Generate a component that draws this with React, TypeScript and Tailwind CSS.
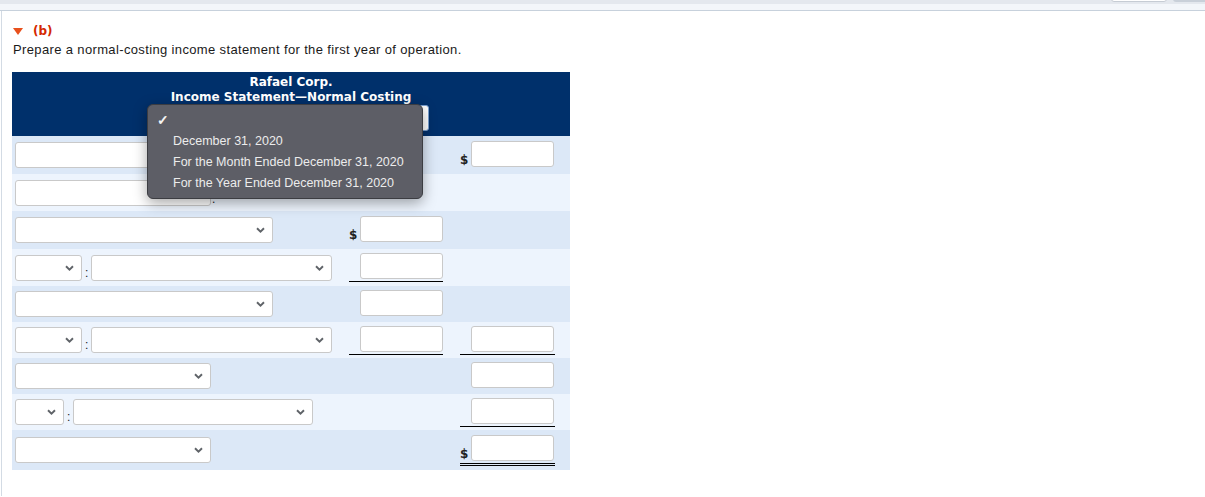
import React from "react";

function Chevron() {
  return (
    <svg width="9" height="6" viewBox="0 0 9 6" className="absolute right-[7px] top-1/2 -translate-y-1/2">
      <path d="M1 1.2 L4.5 4.6 L8 1.2" fill="none" stroke="#5f6368" strokeWidth="1.9" />
    </svg>
  );
}

function Select({ w }: { w: string }) {
  return (
    <div className={`relative h-[26px] ${w} shrink-0 rounded-[3px] border border-[#c9c9c9] bg-white`}>
      <Chevron />
    </div>
  );
}

function Box() {
  return <div className="h-[26px] w-[83px] rounded-[3px] border border-[#c9c9c9] bg-white" />;
}

type Line = "none" | "single" | "double";

function Amount({ dollar, line, col }: { dollar?: boolean; line?: Line; col: 2 | 3 }) {
  const lineCls =
    line === "single"
      ? "border-b border-black"
      : line === "double"
        ? "border-b-[3px] border-double border-black"
        : "border-b border-transparent";
  return (
    <div className={`flex items-end ${col === 2 ? "w-[94px]" : "w-[95px]"} ${lineCls} pb-[2px]`}>
      <span className="w-[11px] text-[12px] font-bold leading-[14px] text-[#222] font-['DejaVu_Sans',Verdana,sans-serif]">
        {dollar ? "$" : ""}
      </span>
      <Box />
    </div>
  );
}

function Row({
  h,
  dark,
  left,
  c2,
  c3,
}: {
  h: string;
  dark: boolean;
  left: React.ReactNode;
  c2?: React.ReactNode;
  c3?: React.ReactNode;
}) {
  return (
    <div className={`flex items-center ${h} ${dark ? "bg-[#dce8f7]" : "bg-[#edf4fd]"}`}>
      <div className="flex w-[337px] items-center pl-[3px]">{left}</div>
      <div className="w-[111px]">{c2}</div>
      <div className="w-[110px]">{c3}</div>
    </div>
  );
}

function Colon() {
  return <span className="mx-[3px] self-end pb-[2px] text-[12px] leading-[12px] text-[#222]">:</span>;
}

export default function App() {
  return (
    <div className="min-h-[497px] bg-white font-['Liberation_Sans',Arial,sans-serif] text-[#222]">
      <div className="relative h-[4px] bg-[#e4e8ee]">
        <div className="absolute left-[1111px] top-[-4px] h-[6px] w-[56px] rounded-b-[3px] border border-[#c6ccd4] bg-white" />
        <div className="absolute left-[1173px] top-[-4px] h-[6px] w-[40px] rounded-b-[3px] bg-[#c9d0d9]" />
      </div>
      <div className="h-[7px] border-b border-[#c7d1dc] bg-[#f3f6fa]" />
      <div className="ml-[1px] min-h-[485px] border-l border-[#d3dbe4] pl-[10px] pt-[12px]">
        <div className="flex items-center gap-[10px] pl-[1px]">
          <svg width="10" height="7" viewBox="0 0 10 7">
            <path d="M0 0 L10 0 L5 7 Z" fill="#e8501c" />
          </svg>
          <span className="font-['DejaVu_Sans',Verdana,sans-serif] text-[12px] font-bold leading-[16px] text-[#d42800]">(b)</span>
        </div>
        <p className="mt-[3px] pl-[1px] text-[13px] leading-[16px] tracking-[0.36px] text-[#1a1a1a]">
          Prepare a normal-costing income statement for the first year of operation.
        </p>
        <div className="relative mt-[14px] w-[558px]">
          <div className="flex h-[64px] flex-col items-center bg-[#00306b] pt-[3px] text-white">
            <div className="font-['DejaVu_Sans',Verdana,sans-serif] text-[12px] font-bold leading-[15px]">Rafael Corp.</div>
            <div className="font-['DejaVu_Sans',Verdana,sans-serif] text-[12px] font-bold leading-[15px]">
              Income Statement—Normal Costing
            </div>
            <div className="ml-[3px] h-[26px] w-[272px] rounded-[3px] border border-[#7aa0d0] bg-white" />
          </div>

          <Row h="h-[38px]" dark left={<div className="h-[26px] w-[258px] rounded-[3px] border border-[#c9c9c9] bg-white" />} c3={<Amount col={3} dollar />} />
          <Row
            h="h-[37px]"
            dark={false}
            left={
              <>
                <div className="h-[26px] w-[196px] rounded-[3px] border border-[#c9c9c9] bg-white" />
                <span className="ml-[1px] self-end pb-[2px] text-[12px] leading-[10px]">.</span>
              </>
            }
          />
          <Row h="h-[38px]" dark left={<Select w="w-[258px]" />} c2={<Amount col={2} dollar />} />
          <Row
            h="h-[37px]"
            dark={false}
            left={
              <>
                <Select w="w-[67px]" />
                <Colon />
                <Select w="w-[241px]" />
              </>
            }
            c2={<Amount col={2} line="single" />}
          />
          <Row h="h-[36px]" dark left={<Select w="w-[258px]" />} c2={<Amount col={2} />} />
          <Row
            h="h-[36px]"
            dark={false}
            left={
              <>
                <Select w="w-[67px]" />
                <Colon />
                <Select w="w-[241px]" />
              </>
            }
            c2={<Amount col={2} line="single" />}
            c3={<Amount col={3} line="single" />}
          />
          <Row h="h-[36px]" dark left={<Select w="w-[196px]" />} c3={<Amount col={3} />} />
          <Row
            h="h-[36px]"
            dark={false}
            left={
              <>
                <Select w="w-[49px]" />
                <Colon />
                <Select w="w-[240px]" />
              </>
            }
            c3={<Amount col={3} line="single" />}
          />
          <Row h="h-[40px]" dark left={<Select w="w-[196px]" />} c3={<Amount col={3} dollar line="double" />} />

          <div className="absolute left-[135px] top-[32px] h-[95px] w-[276px] rounded-[6px] border border-[#3c3d42] bg-[#5d5e66] shadow-[0_4px_14px_rgba(0,0,0,0.35)]">
            <div className="pl-[9px] pt-[7px] text-[14px] font-bold leading-[17px] text-[#f4f4f4]">✓</div>
            <div className="mt-[4px] flex flex-col gap-[5px] pl-[25px] text-[12.5px] leading-[16px] text-[#ececec]">
              <span>December 31, 2020</span>
              <span>For the Month Ended December 31, 2020</span>
              <span>For the Year Ended December 31, 2020</span>
            </div>
          </div>
        </div>
      </div>
    </div>
  );
}
